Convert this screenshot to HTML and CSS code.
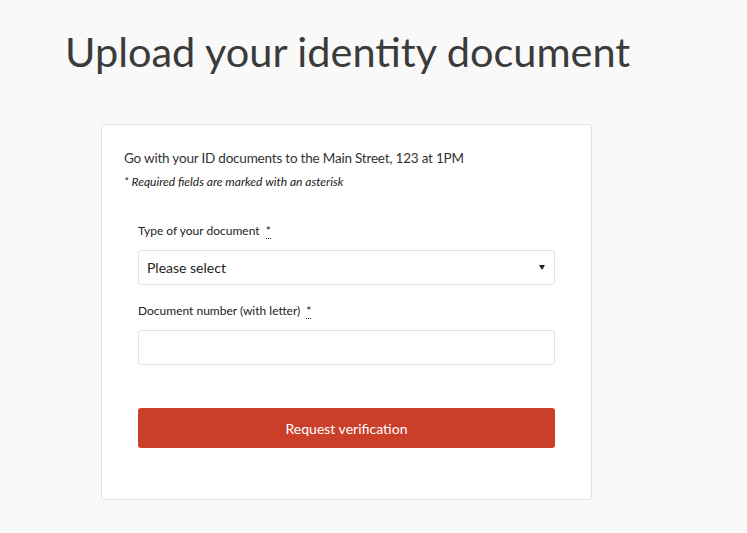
FILE: index.html
```html
<!DOCTYPE html>
<html lang="en">
<head>
<meta charset="utf-8">
<title>Upload your identity document</title>
<link rel="stylesheet" href="styles.css">
</head>
<body>
<main class="page">
  <h1 class="title">Upload your identity document</h1>
  <section class="card">
    <p class="intro">Go with your ID documents to the Main Street, 123 at 1PM</p>
    <p class="note">* Required fields are marked with an asterisk</p>
    <form class="form">
      <div class="field">
        <label class="label" for="doctype">Type of your document <abbr class="req" title="required">*</abbr></label>
        <div class="select" id="doctype">
          <span class="select-text">Please select</span>
          <span class="caret"></span>
        </div>
      </div>
      <div class="field">
        <label class="label" for="docnum">Document number (with letter) <abbr class="req" title="required">*</abbr></label>
        <input class="input" id="docnum" type="text">
      </div>
      <button class="btn" type="button">Request verification</button>
    </form>
  </section>
</main>
</body>
</html>
```

FILE: styles.css
```css
html, body {
  margin: 0;
  padding: 0;
  background: #f9f9f9;
  font-family: "Lato", "Liberation Sans", sans-serif;
  color: #333333;
}
.page {
  padding: 0 0 0 65px;
}
.title {
  margin: 0;
  padding-top: 25px;
  font-size: 41.5px;
  font-weight: 400;
  color: #3b3b3b;
  line-height: 52px;
  letter-spacing: 0;
}
.card {
  margin: 47px 0 0 36px;
  width: 491px;
  height: 376px;
  box-sizing: border-box;
  background: #ffffff;
  border: 1px solid #e4e4e4;
  border-radius: 3px;
  padding: 23px 22px 0 22px;
}
.intro {
  margin: 0;
  font-size: 13.5px;
  letter-spacing: -0.2px;
  line-height: 20px;
  color: #333;
}
.note {
  margin: 6px 0 0;
  font-size: 12px;
  font-style: italic;
  line-height: 16px;
  color: #222;
}
.form {
  margin: 33px 14px 0 14px;
  display: flex;
  flex-direction: column;
}
.field {
  display: flex;
  flex-direction: column;
  margin-bottom: 18px;
}
.label {
  font-size: 12px;
  line-height: 16px;
  color: #222;
  margin-bottom: 11px;
}
.req {
  display: inline-block;
  vertical-align: top;
  height: 15px;
  text-decoration: none;
  border-bottom: 1px dotted #222;
  margin-left: 3px;
}
.select, .input {
  height: 35px;
  box-sizing: border-box;
  border: 1px solid #e2e2e2;
  border-radius: 3px;
  background: #fff;
}
.select {
  display: flex;
  align-items: center;
  justify-content: space-between;
  padding: 0 9px 0 8px;
  font-size: 14px;
  color: #222;
}
.caret {
  width: 0;
  height: 0;
  border-left: 3.5px solid transparent;
  border-right: 3.5px solid transparent;
  border-top: 5px solid #222;
}
.input {
  width: 100%;
  font: inherit;
}
.btn {
  margin-top: 25px;
  height: 40px;
  border: none;
  border-radius: 3px;
  background: #cb3e29;
  color: #fff;
  font-family: inherit;
  font-size: 14px;
}
```
